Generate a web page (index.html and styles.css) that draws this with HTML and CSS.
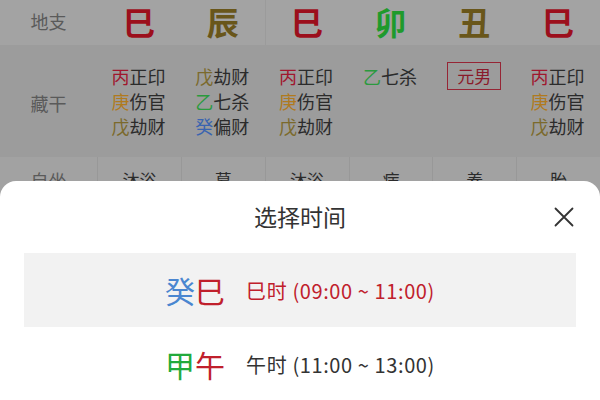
FILE: index.html
```html
<!DOCTYPE html>
<html lang="zh">
<head>
<meta charset="utf-8">
<title>选择时间</title>
<link rel="stylesheet" href="styles.css">
</head>
<body>
<div class="page">
  <div class="chart">
    <div class="row r1">
      <div class="label">地支</div>
      <div class="cell big c-red">巳</div>
      <div class="cell big c-olive">辰</div>
      <div class="cell big c-red">巳</div>
      <div class="cell big c-green">卯</div>
      <div class="cell big c-olive">丑</div>
      <div class="cell big c-red">巳</div>
    </div>
    <div class="row r2">
      <div class="label">藏干</div>
      <div class="cell stack">
        <div><span class="s-red">丙</span>正印</div>
        <div><span class="s-orange">庚</span>伤官</div>
        <div><span class="s-olive">戊</span>劫财</div>
      </div>
      <div class="cell stack">
        <div><span class="s-olive">戊</span>劫财</div>
        <div><span class="s-green">乙</span>七杀</div>
        <div><span class="s-blue">癸</span>偏财</div>
      </div>
      <div class="cell stack">
        <div><span class="s-red">丙</span>正印</div>
        <div><span class="s-orange">庚</span>伤官</div>
        <div><span class="s-olive">戊</span>劫财</div>
      </div>
      <div class="cell stack">
        <div><span class="s-green">乙</span>七杀</div>
      </div>
      <div class="cell stack">
        <div class="badge">元男</div>
      </div>
      <div class="cell stack">
        <div><span class="s-red">丙</span>正印</div>
        <div><span class="s-orange">庚</span>伤官</div>
        <div><span class="s-olive">戊</span>劫财</div>
      </div>
    </div>
    <div class="row r3">
      <div class="label">自坐</div>
      <div class="cell sm">沐浴</div>
      <div class="cell sm">墓</div>
      <div class="cell sm">沐浴</div>
      <div class="cell sm">病</div>
      <div class="cell sm">养</div>
      <div class="cell sm">胎</div>
    </div>
  </div>

  <div class="sheet">
    <div class="sheet-head">
      <div class="sheet-title">选择时间</div>
      <svg class="close" width="20" height="20" viewBox="0 0 20 20" aria-label="关闭">
        <path d="M1.5 1.5 L18.5 18.5 M18.5 1.5 L1.5 18.5" stroke="#333" stroke-width="1.8" stroke-linecap="round" fill="none"/>
      </svg>
    </div>
    <div class="option active">
      <span class="gz"><span class="t-blue">癸</span><span class="t-red">巳</span></span>
      <span class="hour t-red">巳时 (09:00 ~ 11:00)</span>
    </div>
    <div class="option">
      <span class="gz"><span class="t-green">甲</span><span class="t-red">午</span></span>
      <span class="hour">午时 (11:00 ~ 13:00)</span>
    </div>
  </div>
</div>
</body>
</html>
```

FILE: styles.css
```css
html, body {
  margin: 0;
  padding: 0;
}
body {
  width: 600px;
  height: 400px;
  overflow: hidden;
  font-family: "Noto Sans CJK SC", "Noto Sans", sans-serif;
  background: #a2a2a2;
}
.page {
  position: relative;
  width: 600px;
  height: 400px;
  overflow: hidden;
}
.row {
  display: grid;
  grid-template-columns: 97px repeat(6, 1fr);
}
.label {
  display: flex;
  align-items: center;
  justify-content: center;
  font-size: 18px;
  color: #5a5a5a;
}
.r1 {
  height: 45px;
  background: #a3a3a3;
}
.r1 .label {
  padding-bottom: 4px;
}
.r1 .cell:nth-child(4) {
  border-left: 1px solid #9b9b9b;
}
.big {
  display: flex;
  align-items: center;
  justify-content: center;
  font-size: 32px;
  font-weight: 700;
  line-height: 42px;
  padding-bottom: 3px;
}
.c-red { color: #9c0f1c; }
.c-olive { color: #69561a; }
.c-green { color: #1f9a2c; }

.r2 {
  height: 112px;
  background: #9c9c9c;
}
.r2 .label {
  padding-top: 4px;
}
.stack {
  display: flex;
  flex-direction: column;
  align-items: center;
  padding-top: 19px;
  font-size: 18px;
  line-height: 25px;
  color: #2b2b2b;
}
.stack > div {
  width: 55px;
  white-space: nowrap;
}
.stack > .badge {
  width: auto;
  margin-top: -2px;
  padding: 0 9px;
  line-height: 26px;
  font-size: 17px;
  border: 1px solid #962535;
  color: #8a1a2a;
}
.s-red { color: #a0172e; }
.s-orange { color: #b07a1e; }
.s-olive { color: #7b6a2c; }
.s-green { color: #2a9a3e; }
.s-blue { color: #3a64b0; }

.r3 {
  height: 60px;
  background: #a2a2a2;
}
.r3 .label,
.r3 .sm {
  align-items: flex-start;
  padding-top: 10px;
  line-height: 26px;
}
.r3 .label {
  color: #5a5a5a;
}
.r3 .cell {
  border-left: 1px solid #989898;
}
.sm {
  display: flex;
  justify-content: center;
  font-size: 17px;
  color: #2b2b2b;
}

.sheet {
  position: absolute;
  left: 0;
  right: 0;
  top: 181px;
  bottom: 0;
  background: #ffffff;
  border-radius: 16px 16px 0 0;
  padding: 0 24px 0 24px;
}
.sheet-head {
  position: relative;
  height: 72px;
  display: flex;
  align-items: center;
  justify-content: center;
}
.sheet-title {
  font-size: 23px;
  color: #333;
  padding-bottom: 2px;
}
.close {
  position: absolute;
  right: 2px;
  top: 26px;
}
.option {
  height: 73px;
  display: flex;
  align-items: center;
  justify-content: center;
  gap: 21px;
  border-bottom: 1px solid #e8e8e8;
}
.option.active {
  background: #f2f2f2;
  border-bottom-color: #f2f2f2;
}
.gz {
  font-size: 30px;
  line-height: 1;
}
.hour {
  font-size: 20px;
  letter-spacing: 0.6px;
  color: #333;
  padding-top: 2px;
}
.t-blue { color: #4a86d0; }
.t-red { color: #c0202c; }
.t-green { color: #22aa3c; }
```
